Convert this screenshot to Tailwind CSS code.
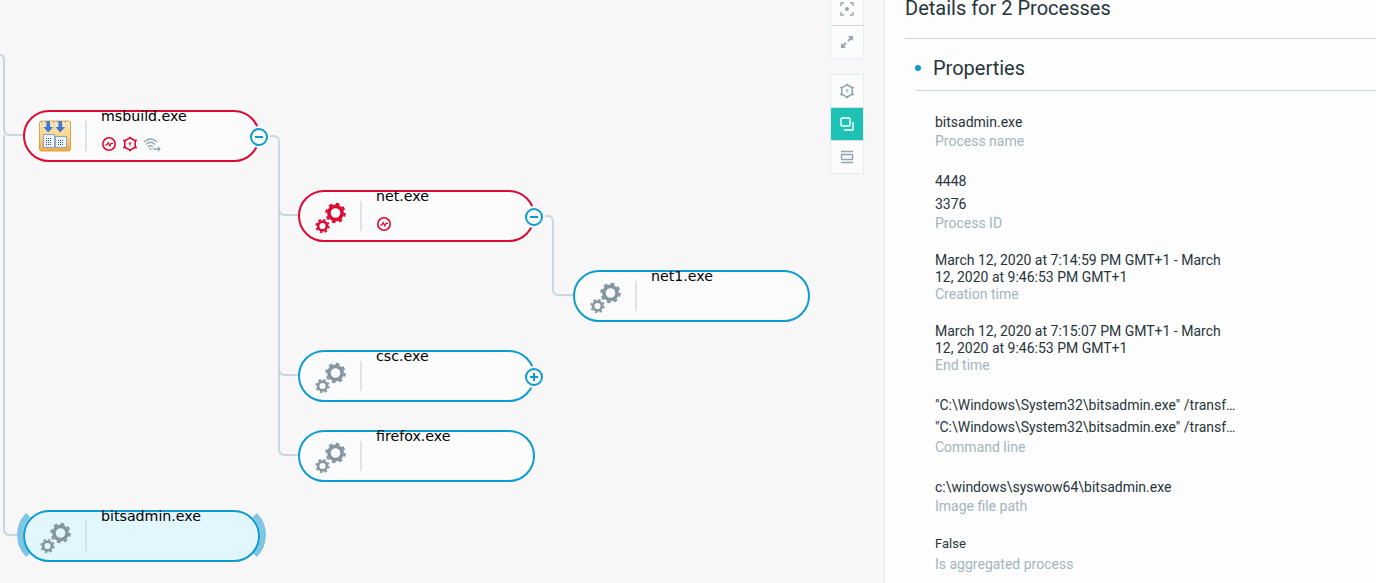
<!DOCTYPE html>
<html lang="en">
<head>
<meta charset="utf-8">
<title>Process details</title>
<script src="https://cdn.jsdelivr.net/npm/@tailwindcss/browser@4"></script>
</head>
<body class="m-0 overflow-hidden bg-[#f7f7f7]">
<svg width="0" height="0" class="absolute">
  <defs>
    <symbol id="gears" viewBox="0 0 62 51">
      <circle cx="37" cy="22" r="6.6" fill="none" stroke="currentColor" stroke-width="3.6"/>
      <circle cx="37" cy="22" r="9.2" fill="none" stroke="currentColor" stroke-width="2.2" stroke-dasharray="3.6 3.62"/>
      <circle cx="24" cy="35" r="4.4" fill="none" stroke="currentColor" stroke-width="2.6"/>
      <circle cx="24" cy="35" r="6.3" fill="none" stroke="currentColor" stroke-width="1.7" stroke-dasharray="2.47 2.47"/>
    </symbol>
    <symbol id="pulse" viewBox="0 0 16 16">
      <circle cx="8" cy="8" r="6.2" fill="none" stroke="#dc0a33" stroke-width="1.6"/>
      <path d="M4 9 L6 9 L7.2 6.6 L8.8 9.8 L10 7.4 L12 7.4" fill="none" stroke="#dc0a33" stroke-width="1.2"/>
    </symbol>
    <symbol id="hex" viewBox="0 0 16 16">
      <path d="M8 1.8 L13.2 4.8 L13.2 11.2 L8 14.2 L2.8 11.2 L2.8 4.8 Z" fill="none" stroke="currentColor" stroke-width="1.6"/>
      <circle cx="8" cy="1.6" r="1" fill="currentColor"/><circle cx="14" cy="4.4" r="1" fill="currentColor"/><circle cx="14" cy="11.6" r="1" fill="currentColor"/><circle cx="8" cy="14.4" r="1" fill="currentColor"/><circle cx="2" cy="11.6" r="1" fill="currentColor"/><circle cx="2" cy="4.4" r="1" fill="currentColor"/>
      <path d="M6.6 7 H9.4 M8 7 V9.6" stroke="currentColor" stroke-width="1.2" fill="none"/>
    </symbol>
  </defs>
</svg>

<div class="flex h-[583px] w-[1376px] overflow-hidden">
  <main class="relative h-full w-[884px] shrink-0 bg-[#f7f7f7]">
    <svg class="absolute left-0 top-0" width="884" height="583" fill="none">
      <g stroke="#c9d6de" stroke-width="2">
        <path d="M0 55 Q4 55 4 60 V129 Q4 135 10 135 H24"/>
        <path d="M4 135 V529 Q4 535 10 535 H24"/>
        <path d="M268 136 H273 Q279 136 279 142 V449 Q279 455 285 455 H299"/>
        <path d="M279 209 Q279 215 285 215 H299"/>
        <path d="M279 369 Q279 375 285 375 H299"/>
        <path d="M543 216 H547 Q553 216 553 222 V289 Q553 295 559 295 H574"/>
      </g>
      <g stroke="#7fc6e2" stroke-width="6">
        <path d="M28.2 515.2 A28 28 0 0 0 28.2 554.8"/>
        <path d="M254.8 515.2 A28 28 0 0 1 254.8 554.8"/>
      </g>
    </svg>

    <!-- msbuild -->
    <div class="absolute left-[23px] top-[110px] flex h-[52px] w-[237px] items-center rounded-[26px] border-2 border-[#dc0a33] bg-[#fbfbfb]">
      <div class="flex w-[60px] shrink-0 items-center justify-center">
        <svg width="32" height="32" viewBox="0 0 32 32">
          <defs><linearGradient id="tile" x1="0" y1="0" x2="0" y2="1"><stop offset="0" stop-color="#fdeabf"/><stop offset="0.5" stop-color="#fbd48a"/><stop offset="1" stop-color="#f3a93c"/></linearGradient></defs>
          <rect x="0.5" y="1" width="31" height="30" rx="2" fill="url(#tile)" stroke="#dba24a"/>
          <path d="M2 2 H30" stroke="#3f6fc0" stroke-width="1" stroke-dasharray="1 3"/>
          <path d="M3 5 H29 M2 8 H30" stroke="#9fb2d4" stroke-width="1" stroke-dasharray="1 3"/>
          <path d="M7.5 1 H11 V7 H14 L9.2 12.5 L4.5 7 H7.5 Z M19.5 1 H23 V7 H26 L21.2 12.5 L16.5 7 H19.5 Z" fill="#3f78d2"/>
          <rect x="4.5" y="14.5" width="11" height="13" fill="#eef3fa" stroke="#8aa6c9"/>
          <rect x="16.5" y="16.5" width="11" height="11" fill="#eef3fa" stroke="#8aa6c9"/>
          <path d="M7 18.5 H13 M7 20.5 H13 M7 22.5 H13 M7 24.5 H13 M19 20.5 H25 M19 22.5 H25 M19 24.5 H25" stroke="#2d4f9e" stroke-width="1" stroke-dasharray="1 1"/>
        </svg>
      </div>
      <div class="h-[30px] w-[2px] shrink-0 bg-[#dbe3e8]"></div>
      <div class="ml-[14px] flex h-full flex-col">
        <div class="mt-[-4px] font-['DejaVu_Sans'] text-[14.2px] leading-[16px] text-black">msbuild.exe</div>
        <div class="mt-[12px] flex items-center gap-[5px]">
          <svg width="16" height="16"><use href="#pulse"/></svg>
          <svg width="16" height="16" class="text-[#dc0a33]"><use href="#hex"/></svg>
          <svg width="18" height="16" viewBox="0 0 18 16" fill="none" stroke="#93a8b3" stroke-width="1.3">
            <path d="M1 6 Q7.5 0 14 6 M3 8.5 Q7.5 4 12 8.5 M5 11 Q7.5 8.5 10 11"/>
            <circle cx="7.5" cy="13" r="1.1" fill="#93a8b3" stroke="none"/>
            <path d="M10 13 H17 M15 11 L17 13 L15 15"/>
          </svg>
        </div>
      </div>
      <div class="absolute right-[-10px] top-[16px] flex h-[18px] w-[18px] items-center justify-center rounded-full border-2 border-[#0e9ccf] bg-[#fbfbfb] ring-2 ring-[#f7f7f7]"><span class="h-[2px] w-[8px] bg-[#0e9ccf]"></span></div>
    </div>

    <!-- net -->
    <div class="absolute left-[298px] top-[190px] flex h-[52px] w-[237px] items-center rounded-[26px] border-2 border-[#dc0a33] bg-[#fbfbfb]">
      <svg width="60" height="47" viewBox="1.5 2 60 47" class="shrink-0 text-[#dc0a33]"><use href="#gears" width="62" height="51"/></svg>
      <div class="h-[30px] w-[2px] shrink-0 bg-[#dbe3e8]"></div>
      <div class="ml-[14px] flex h-full flex-col">
        <div class="mt-[-4px] font-['DejaVu_Sans'] text-[14.2px] leading-[16px] text-black">net.exe</div>
        <div class="mt-[12px] flex items-center gap-[5px]"><svg width="16" height="16"><use href="#pulse"/></svg></div>
      </div>
      <div class="absolute right-[-10px] top-[16px] flex h-[18px] w-[18px] items-center justify-center rounded-full border-2 border-[#0e9ccf] bg-[#fbfbfb] ring-2 ring-[#f7f7f7]"><span class="h-[2px] w-[8px] bg-[#0e9ccf]"></span></div>
    </div>

    <!-- net1 -->
    <div class="absolute left-[573px] top-[270px] flex h-[52px] w-[237px] items-center rounded-[26px] border-2 border-[#0e9ccf] bg-[#fbfbfb]">
      <svg width="60" height="47" viewBox="1.5 2 60 47" class="shrink-0 text-[#84969f]"><use href="#gears" width="62" height="51"/></svg>
      <div class="h-[30px] w-[2px] shrink-0 bg-[#dbe3e8]"></div>
      <div class="ml-[14px] flex h-full flex-col">
        <div class="mt-[-4px] font-['DejaVu_Sans'] text-[14.2px] leading-[16px] text-black">net1.exe</div>
      </div>
    </div>

    <!-- csc -->
    <div class="absolute left-[298px] top-[350px] flex h-[52px] w-[237px] items-center rounded-[26px] border-2 border-[#0e9ccf] bg-[#fbfbfb]">
      <svg width="60" height="47" viewBox="1.5 2 60 47" class="shrink-0 text-[#84969f]"><use href="#gears" width="62" height="51"/></svg>
      <div class="h-[30px] w-[2px] shrink-0 bg-[#dbe3e8]"></div>
      <div class="ml-[14px] flex h-full flex-col">
        <div class="mt-[-4px] font-['DejaVu_Sans'] text-[14.2px] leading-[16px] text-black">csc.exe</div>
      </div>
      <div class="absolute right-[-10px] top-[16px] flex h-[18px] w-[18px] items-center justify-center rounded-full border-2 border-[#0e9ccf] bg-[#fbfbfb] ring-2 ring-[#f7f7f7]">
        <svg width="10" height="10" viewBox="0 0 10 10"><path d="M1 5 H9 M5 1 V9" stroke="#0e9ccf" stroke-width="2"/></svg>
      </div>
    </div>

    <!-- firefox -->
    <div class="absolute left-[298px] top-[430px] flex h-[52px] w-[237px] items-center rounded-[26px] border-2 border-[#0e9ccf] bg-[#fbfbfb]">
      <svg width="60" height="47" viewBox="1.5 2 60 47" class="shrink-0 text-[#84969f]"><use href="#gears" width="62" height="51"/></svg>
      <div class="h-[30px] w-[2px] shrink-0 bg-[#dbe3e8]"></div>
      <div class="ml-[14px] flex h-full flex-col">
        <div class="mt-[-4px] font-['DejaVu_Sans'] text-[14.2px] leading-[16px] text-black">firefox.exe</div>
      </div>
    </div>

    <!-- bitsadmin -->
    <div class="absolute left-[23px] top-[510px] flex h-[52px] w-[237px] items-center rounded-[26px] border-2 border-[#0e9ccf] bg-[#e2f6fe]">
      <svg width="60" height="47" viewBox="1.5 2 60 47" class="shrink-0 text-[#84969f]"><use href="#gears" width="62" height="51"/></svg>
      <div class="h-[30px] w-[2px] shrink-0 bg-[#d3e2e9]"></div>
      <div class="ml-[14px] flex h-full flex-col">
        <div class="mt-[-4px] font-['DejaVu_Sans'] text-[14.2px] leading-[16px] text-black">bitsadmin.exe</div>
      </div>
    </div>

    <!-- toolbar -->
    <div class="absolute left-[830px] top-[-8px] flex w-[34px] flex-col gap-[15px]">
      <div class="flex flex-col border border-[#e3eef2] bg-[#fcfcfc]">
        <div class="flex h-[33px] items-center justify-center border-b border-[#c9d6de]">
          <svg width="14" height="14" viewBox="0 0 14 14" fill="none" stroke="#93a5af" stroke-width="1.4"><path d="M1 4 V1 H4 M10 1 H13 V4 M13 10 V13 H10 M4 13 H1 V10"/><circle cx="7" cy="7" r="2" fill="#93a5af" stroke="none"/></svg>
        </div>
        <div class="flex h-[32px] items-center justify-center">
          <svg width="14" height="14" viewBox="0 0 14 14" fill="#93a5af"><path d="M8 1 H13 V6 L11.2 4.2 L8.6 6.8 L7.2 5.4 L9.8 2.8 Z M6 13 H1 V8 L2.8 9.8 L5.4 7.2 L6.8 8.6 L4.2 11.2 Z"/></svg>
        </div>
      </div>
      <div class="flex flex-col border border-[#e3eef2] bg-[#fcfcfc]">
        <div class="flex h-[33px] items-center justify-center border-b border-[#d5e0e5]">
          <svg width="16" height="16" class="text-[#93a5af]"><use href="#hex"/></svg>
        </div>
        <div class="flex h-[33px] items-center justify-center border-b border-[#d5e0e5] bg-[#20c1b5]">
          <svg width="14" height="14" viewBox="0 0 14 14" fill="none" stroke="#fff" stroke-width="1.4"><rect x="1" y="1" width="9" height="8" rx="1"/><path d="M13 5 V13 H4"/></svg>
        </div>
        <div class="flex h-[32px] items-center justify-center">
          <svg width="14" height="14" viewBox="0 0 14 14" fill="none" stroke="#93a5af" stroke-width="1.4"><path d="M1 1.5 H13 M1 12.5 H13"/><rect x="1.5" y="4.5" width="11" height="5" rx="0.5"/></svg>
        </div>
      </div>
    </div>
  </main>

  <aside class="h-full w-[492px] shrink-0 overflow-hidden border-l border-[#dceef4] bg-[#fdfdfd] pl-[20px] font-['Roboto']">
    <h1 class="mt-[-7px] border-b border-[#c5d6df] pb-[15px] text-[20px] font-normal leading-[30px] text-[#27343b]">Details for 2 Processes</h1>
    <section class="ml-[10px]">
      <h2 class="flex h-[52px] items-center gap-[12px] border-b border-[#c5d6df] pt-[6px] text-[20px] font-normal leading-[30px] text-[#27343b]">
        <span class="h-[6px] w-[6px] rounded-full bg-[#0e9ccf]"></span>Properties
      </h2>
      <dl class="box-content w-[301px] pl-[20px] pt-[23px] text-[14px] leading-[17px] text-[#27343b]">
        <dd>bitsadmin.exe</dd>
        <dt class="mt-[1px] leading-[19px] text-[#a3b5be]">Process name</dt>

        <dd class="mt-[22px]">4448</dd>
        <dd class="mt-[6px]">3376</dd>
        <dt class="mt-[1px] leading-[19px] text-[#a3b5be]">Process ID</dt>

        <dd class="mt-[19px]">March 12, 2020 at 7:14:59 PM GMT+1 - March 12, 2020 at 9:46:53 PM GMT+1</dd>
        <dt class="mt-[-1px] leading-[19px] text-[#a3b5be]">Creation time</dt>

        <dd class="mt-[19px]">March 12, 2020 at 7:15:07 PM GMT+1 - March 12, 2020 at 9:46:53 PM GMT+1</dd>
        <dt class="mt-[-1px] leading-[19px] text-[#a3b5be]">End time</dt>

        <dd class="mt-[22px] truncate">"C:\Windows\System32\bitsadmin.exe" /transfer job /download /priority high</dd>
        <dd class="mt-[5px] truncate">"C:\Windows\System32\bitsadmin.exe" /transfer job /download /priority high</dd>
        <dt class="mt-[2px] leading-[19px] text-[#a3b5be]">Command line</dt>

        <dd class="mt-[22px]">c:\windows\syswow64\bitsadmin.exe</dd>
        <dt class="mt-[1px] leading-[19px] text-[#a3b5be]">Image file path</dt>

        <dd class="mt-[19px] text-[13px]">False</dd>
        <dt class="mt-[3px] leading-[19px] text-[#a3b5be]">Is aggregated process</dt>
      </dl>
    </section>
  </aside>
</div>
</body>
</html>
